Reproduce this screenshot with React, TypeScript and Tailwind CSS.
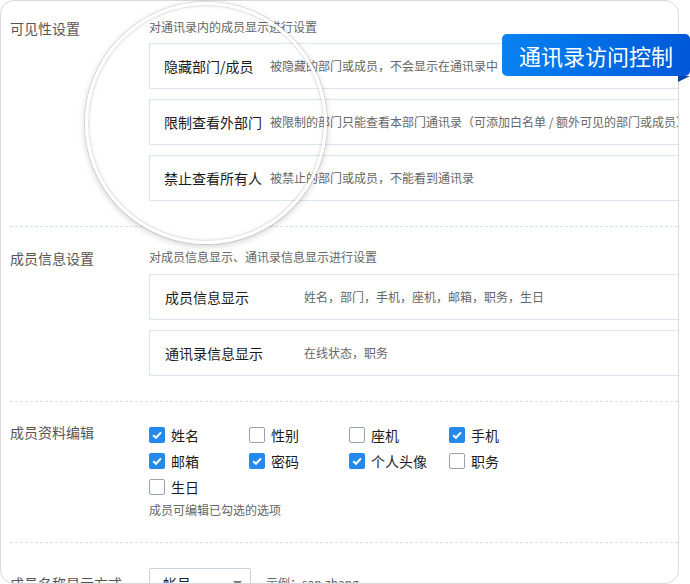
import React from "react";

const rows1 = [
  { t: "隐藏部门/成员", d: "被隐藏的部门或成员，不会显示在通讯录中" },
  { t: "限制查看外部门", d: "被限制的部门只能查看本部门通讯录（可添加白名单 / 额外可见的部门或成员）" },
  { t: "禁止查看所有人", d: "被禁止的部门或成员，不能看到通讯录" },
];

const rows2 = [
  { t: "成员信息显示", d: "姓名，部门，手机，座机，邮箱，职务，生日" },
  { t: "通讯录信息显示", d: "在线状态，职务" },
];

const checks = [
  { l: "姓名", c: true },
  { l: "性别", c: false },
  { l: "座机", c: false },
  { l: "手机", c: true },
  { l: "邮箱", c: true },
  { l: "密码", c: true },
  { l: "个人头像", c: true },
  { l: "职务", c: false },
  { l: "生日", c: false },
];

function Section1({ lens }: { lens?: boolean }) {
  return (
    <div
      className={
        lens
          ? "flex pt-[18px] pb-[25px] border-b border-transparent"
          : "flex pt-[18px] pb-[25px] border-b border-dashed border-[#d3e2ef]"
      }
    >
      <div className="w-[139px] shrink-0 -mt-px text-[14px] leading-[20px] text-[#555]">可见性设置</div>
      <div className="flex flex-col">
        <div className="text-[12px] leading-[16px] text-[#666] whitespace-nowrap">对通讯录内的成员显示进行设置</div>
        <div className="mt-[8px] flex flex-col gap-[10px]">
          {rows1.map((r) => (
            <div
              key={r.t}
              className="flex h-[46px] w-[560px] items-center border border-[#dbe6f1] pl-[14px] whitespace-nowrap"
            >
              <div className="w-[106px] shrink-0 text-[14px] leading-[20px] text-[#1a1a1a]">{r.t}</div>
              <div className="text-[12px] leading-[16px] text-[#666]">{r.d}</div>
            </div>
          ))}
        </div>
      </div>
    </div>
  );
}

function CheckBox({ checked }: { checked: boolean }) {
  if (checked) {
    return (
      <div className="flex h-[16px] w-[16px] items-center justify-center rounded-[2px] bg-[#2589ec]">
        <svg width="12" height="12" viewBox="0 0 12 12">
          <polyline points="2.2,6.2 5,8.8 10,3.4" fill="none" stroke="#fff" strokeWidth="2" />
        </svg>
      </div>
    );
  }
  return <div className="h-[16px] w-[16px] rounded-[2px] border border-[#97a3b2] bg-white" />;
}

export default function App() {
  return (
    <div className="relative h-[584px] w-[690px] bg-white font-['Noto_Sans_CJK_SC','Noto_Sans',sans-serif]">
      <div className="h-[584px] w-[679px] overflow-hidden rounded-[14px] border border-[#d9d9d9] bg-white">
        <div className="ml-[9px]">
          <Section1 />

          <div className="flex pt-[22px] pb-[25px] border-b border-dashed border-[#d3e2ef]">
            <div className="w-[139px] shrink-0 -mt-px text-[14px] leading-[20px] text-[#555]">成员信息设置</div>
            <div className="flex flex-col">
              <div className="text-[12px] leading-[16px] text-[#666] whitespace-nowrap">
                对成员信息显示、通讯录信息显示进行设置
              </div>
              <div className="mt-[9px] flex flex-col gap-[10px]">
                {rows2.map((r) => (
                  <div
                    key={r.t}
                    className="flex h-[46px] w-[560px] items-center border border-[#dbe6f1] pl-[15px] whitespace-nowrap"
                  >
                    <div className="w-[139px] shrink-0 text-[14px] leading-[20px] text-[#1a1a1a]">{r.t}</div>
                    <div className="text-[12px] leading-[16px] text-[#666]">{r.d}</div>
                  </div>
                ))}
              </div>
            </div>
          </div>

          <div className="flex pt-[20px] pb-[24px] border-b border-dashed border-[#d3e2ef]">
            <div className="w-[139px] shrink-0 text-[14px] leading-[20px] text-[#555]">成员资料编辑</div>
            <div className="flex flex-col">
              <div className="grid grid-cols-[100px_100px_100px_100px]">
                {checks.map((c) => (
                  <div key={c.l} className="flex h-[26px] items-center gap-[6px]">
                    <CheckBox checked={c.c} />
                    <span className="text-[14px] leading-[20px] text-[#1a1a1a]">{c.l}</span>
                  </div>
                ))}
              </div>
              <div className="mt-[2px] text-[12px] leading-[16px] text-[#666]">成员可编辑已勾选的选项</div>
            </div>
          </div>

          <div className="flex items-center pt-[25px]">
            <div className="w-[139px] shrink-0 text-[14px] leading-[20px] text-[#555]">成员名称显示方式</div>
            <div className="flex h-[30px] w-[102px] items-center justify-between rounded-[2px] border border-[#c9d4e0] pl-[13px] pr-[8px]">
              <span className="text-[14px] leading-[20px] text-[#1a1a1a]">帐号</span>
              <svg width="9" height="5" viewBox="0 0 9 5">
                <polygon points="0,0 9,0 4.5,5" fill="#6f7d8c" />
              </svg>
            </div>
            <span className="ml-[15px] text-[12px] leading-[16px] text-[#666]">示例：san.zhang</span>
          </div>
        </div>
      </div>

      {/* magnifier lens */}
      <div className="absolute left-[85px] top-[2px] h-[242px] w-[242px] overflow-hidden rounded-full bg-white">
        <div className="absolute left-[-84px] top-[-1px] w-[677px]">
          <div className="ml-[9px]">
            <Section1 lens />
          </div>
        </div>
      </div>
      <div className="pointer-events-none absolute left-[85px] top-[2px] h-[242px] w-[242px] rounded-full border-[3px] border-white shadow-[0_0_0_1px_rgba(0,0,0,0.1),0_2px_7px_rgba(0,0,0,0.2),inset_0_0_0_1px_rgba(0,0,0,0.06),inset_0_0_4px_rgba(0,0,0,0.15)]" />

      {/* badge */}
      <div className="absolute left-[502px] top-[34px] flex h-[42px] w-[188px] items-center justify-center rounded-[5px] bg-gradient-to-r from-[#0a82f2] to-[#0058d9]">
        <span className="text-[22px] leading-[28px] text-white">通讯录访问控制</span>
      </div>
      <svg className="absolute left-[678px] top-[76px]" width="12" height="6" viewBox="0 0 12 6">
        <polygon points="0,0 12,0 0,6" fill="#0047a3" />
      </svg>
    </div>
  );
}
